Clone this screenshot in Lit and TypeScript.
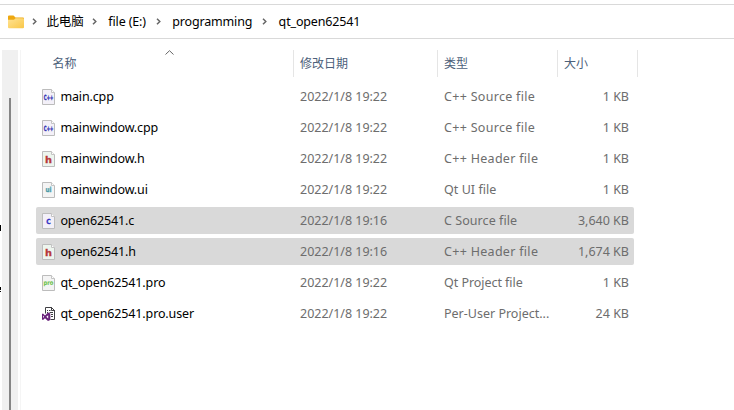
import { LitElement, html, css, svg } from "lit";
import { customElement, property } from "lit/decorators.js";
import { classMap } from "lit/directives/class-map.js";

type Kind = "cpp" | "h" | "ui" | "c" | "pro" | "user";

interface FileRow {
  name: string;
  kind: Kind;
  date: string;
  type: string;
  size: string;
  selected?: boolean;
}

const FILES: FileRow[] = [
  { name: "main.cpp", kind: "cpp", date: "2022/1/8 19:22", type: "C++ Source file", size: "1 KB" },
  { name: "mainwindow.cpp", kind: "cpp", date: "2022/1/8 19:22", type: "C++ Source file", size: "1 KB" },
  { name: "mainwindow.h", kind: "h", date: "2022/1/8 19:22", type: "C++ Header file", size: "1 KB" },
  { name: "mainwindow.ui", kind: "ui", date: "2022/1/8 19:22", type: "Qt UI file", size: "1 KB" },
  { name: "open62541.c", kind: "c", date: "2022/1/8 19:16", type: "C Source file", size: "3,640 KB", selected: true },
  { name: "open62541.h", kind: "h", date: "2022/1/8 19:16", type: "C++ Header file", size: "1,674 KB", selected: true },
  { name: "qt_open62541.pro", kind: "pro", date: "2022/1/8 19:22", type: "Qt Project file", size: "1 KB" },
  { name: "qt_open62541.pro.user", kind: "user", date: "2022/1/8 19:22", type: "Per-User Project...", size: "24 KB" },
];

interface Label {
  text: string;
  color: string;
  tint: string;
  size: number;
  width: number;
  y: number;
}

const LABELS: Record<string, Label> = {
  cpp: { text: "C++", color: "#3434b4", tint: "#f3f0f8", size: 7, width: 9.5, y: 11 },
  c: { text: "C", color: "#3434c4", tint: "#f3f0f8", size: 7, width: 4.5, y: 10.6 },
  h: { text: "h", color: "#b83838", tint: "#edf5ee", size: 9.5, width: 7, y: 12.4 },
  ui: { text: "ui", color: "#4899a8", tint: "#f4f4f4", size: 7, width: 6, y: 10 },
  pro: { text: "pro", color: "#66c044", tint: "#f4f4f4", size: 6.5, width: 10, y: 9.8 },
};

@customElement("file-icon")
export class FileIcon extends LitElement {
  @property() kind: Kind = "cpp";

  static styles = css`
    :host { display: block; width: 14px; height: 16px; }
    svg { display: block; overflow: visible; }
    text { font-family: "DejaVu Sans", sans-serif; font-weight: 700; stroke-width: 0.3px; }
    .cpp { stroke-width: 0.4px; }
    .pro { stroke-width: 0; }
  `;

  render() {
    if (this.kind === "user") {
      return html`<svg width="14" height="16" viewBox="0 0 14 16">
        <path d="M3.5 7.5V1.5H9.5L12.5 4.5V13.5H8.5" fill="#fff" stroke="#404044" />
        <path d="M9.5 1V4.5H13" fill="none" stroke="#404044" />
        <path d="M5 4.5H6M7 4.5H8.5M5 6.5H6M7.5 6.5H11M9 8.5H11M9 10.5H11" stroke="#404044" />
        <path d="M0 8L1 7.5L3 9.4L6 6.5L8.3 7.5V14L6 15L3 12.2L1 14L0 13.5ZM1.1 9.6V12L2.2 10.8ZM6.2 9.2L4.3 10.8L6.2 12.5Z" fill="#68217a" fill-rule="evenodd" />
      </svg>`;
    }
    const l = LABELS[this.kind];
    return html`<svg width="14" height="16" viewBox="0 0 14 16">
      <path d="M.5.5H9.5L12.5 3.5V15.5H.5Z" fill=${l.tint} stroke="#bcbcbc" />
      <path d="M9.5.5V3.5H12.5" fill="#fff" stroke="#c4c4c4" />
      ${svg`<text class=${this.kind} x=${6.5 - l.width / 2} y=${l.y} font-size=${l.size} fill=${l.color} stroke=${l.color}
        textLength=${l.width} lengthAdjust="spacingAndGlyphs">${l.text}</text>`}
    </svg>`;
  }
}

@customElement("app-root")
export class AppRoot extends LitElement {
  static styles = css`
    :host {
      display: flex; flex-direction: column;
      width: 734px; height: 410px; overflow: hidden; background: #fff;
      font: 12.5px/20px "Noto Sans", "Noto Sans CJK SC", sans-serif; color: #000;
      white-space: nowrap;
    }
    .address {
      flex: none; box-sizing: border-box; height: 35px; margin-top: 4px;
      border-top: 1px solid #d9d9d9; border-bottom: 1px solid #d9d9d9;
      display: flex; align-items: center; padding-left: 8px;
      letter-spacing: -0.15px;
    }
    .folder { width: 16px; height: 14px; flex: none; }
    .crumb { display: flex; align-items: center; margin-left: 10px; }
    .crumb:first-of-type { margin-left: 8px; }
    .crumb:nth-of-type(2) { margin-left: 8.5px; }
    .crumb svg { width: 5px; height: 7px; margin-right: 11.3px; flex: none; }
    .crumb:first-of-type svg { margin-right: 9.5px; }
    .crumb:last-of-type { letter-spacing: -0.15px; }
    .main { display: flex; flex: 1; margin-top: 11px; min-height: 0; }
    .nav { width: 2px; flex: none; height: 360px; }
    .nav svg { display: block; }
    .scroll { width: 16px; background: #f0f0f0; flex: none; display: flex; }
    .thumb { width: 2px; margin: 48px 0 0 7px; background: #858585; }
    .edge { width: 1px; margin-left: 2px; background: #f5f5f5; flex: none; }
    .list { margin-left: 15px; width: 602px; flex: none; }
    .head {
      display: grid; grid-template-columns: 258px 144px 120px 80px;
      height: 27px; color: #4c607a; position: relative; font-size: 12px;
    }
    .head span { border-right: 1px solid #e5e5e5; padding: 4px 0 0 6px; box-sizing: border-box; }
    .head span:first-child { padding-left: 16.5px; }
    .sort { position: absolute; left: 129px; top: 0; width: 9px; height: 5px; }
    .rows { display: grid; row-gap: 4px; margin-top: 6px; }
    .row {
      display: grid; grid-template-columns: 24px 240px 144px 106px 79px;
      width: 598px; height: 27px; align-items: center; color: #6d6d6d; border-radius: 2px;
    }
    .row.selected { background: #d9d9d9; }
    .row file-icon { margin-left: 6px; }
    .name { color: #000; letter-spacing: -0.13px; padding-left: 0.4px; }
    .date { letter-spacing: -0.02px; }
    .type { letter-spacing: 0.3px; }
    .type.c { letter-spacing: 0.06px; }
    .type.ui { letter-spacing: 0.05px; }
    .type.pro { letter-spacing: -0.05px; }
    .type.user { letter-spacing: 0; }
    .size { text-align: right; }
  `;

  render() {
    return html`
      <div class="address">
        <svg class="folder" viewBox="0 0 16 14">
          <defs><linearGradient id="g" x2="1" y2="1"><stop stop-color="#ffe394" /><stop offset="1" stop-color="#f9c748" /></linearGradient></defs>
          <path d="M0 1.5Q0 .5 1 .5H5.5L7.5 2.5H15Q16 2.5 16 3.5V6H0Z" fill="#eea810" />
          <path d="M0 4.8H6L7.6 3.2H15Q16 3.2 16 4.2V12.2Q16 13.2 15 13.2H1Q0 13.2 0 12.2Z" fill="url(#g)" />
        </svg>
        ${["此电脑", "file (E:)", "programming", "qt_open62541"].map(
          (c) => html`<div class="crumb">
            <svg viewBox="0 0 5 7"><path d="M1 .7L3.8 3.5L1 6.3" fill="none" stroke="#666" stroke-width="1.5" /></svg>
            <span>${c}</span>
          </div>`
        )}
      </div>
      <div class="main">
        <div class="nav">
          <svg width="2" height="360" viewBox="0 0 2 360"><path d="M0 175H1V181H0ZM0 237H1V240H0ZM0 241H1V242H0Z" fill="#000" /></svg>
        </div>
        <div class="scroll"><div class="thumb"></div></div>
        <div class="edge"></div>
        <div class="list">
          <div class="head">
            <span>名称</span><span>修改日期</span><span>类型</span><span>大小</span>
            <svg class="sort" viewBox="0 0 9 5"><path d="M.5 4.5L4.5.7L8.5 4.5" fill="none" stroke="#666" /></svg>
          </div>
          <div class="rows">
            ${FILES.map(
              (f) => html`<div class=${classMap({ row: true, selected: !!f.selected })}>
                <file-icon .kind=${f.kind}></file-icon>
                <span class="name">${f.name}</span>
                <span class="date">${f.date}</span>
                <span class=${"type " + (f.type.startsWith("C++") ? "cpp" : f.kind)}>${f.type}</span>
                <span class="size">${f.size}</span>
              </div>`
            )}
          </div>
        </div>
      </div>
    `;
  }
}
